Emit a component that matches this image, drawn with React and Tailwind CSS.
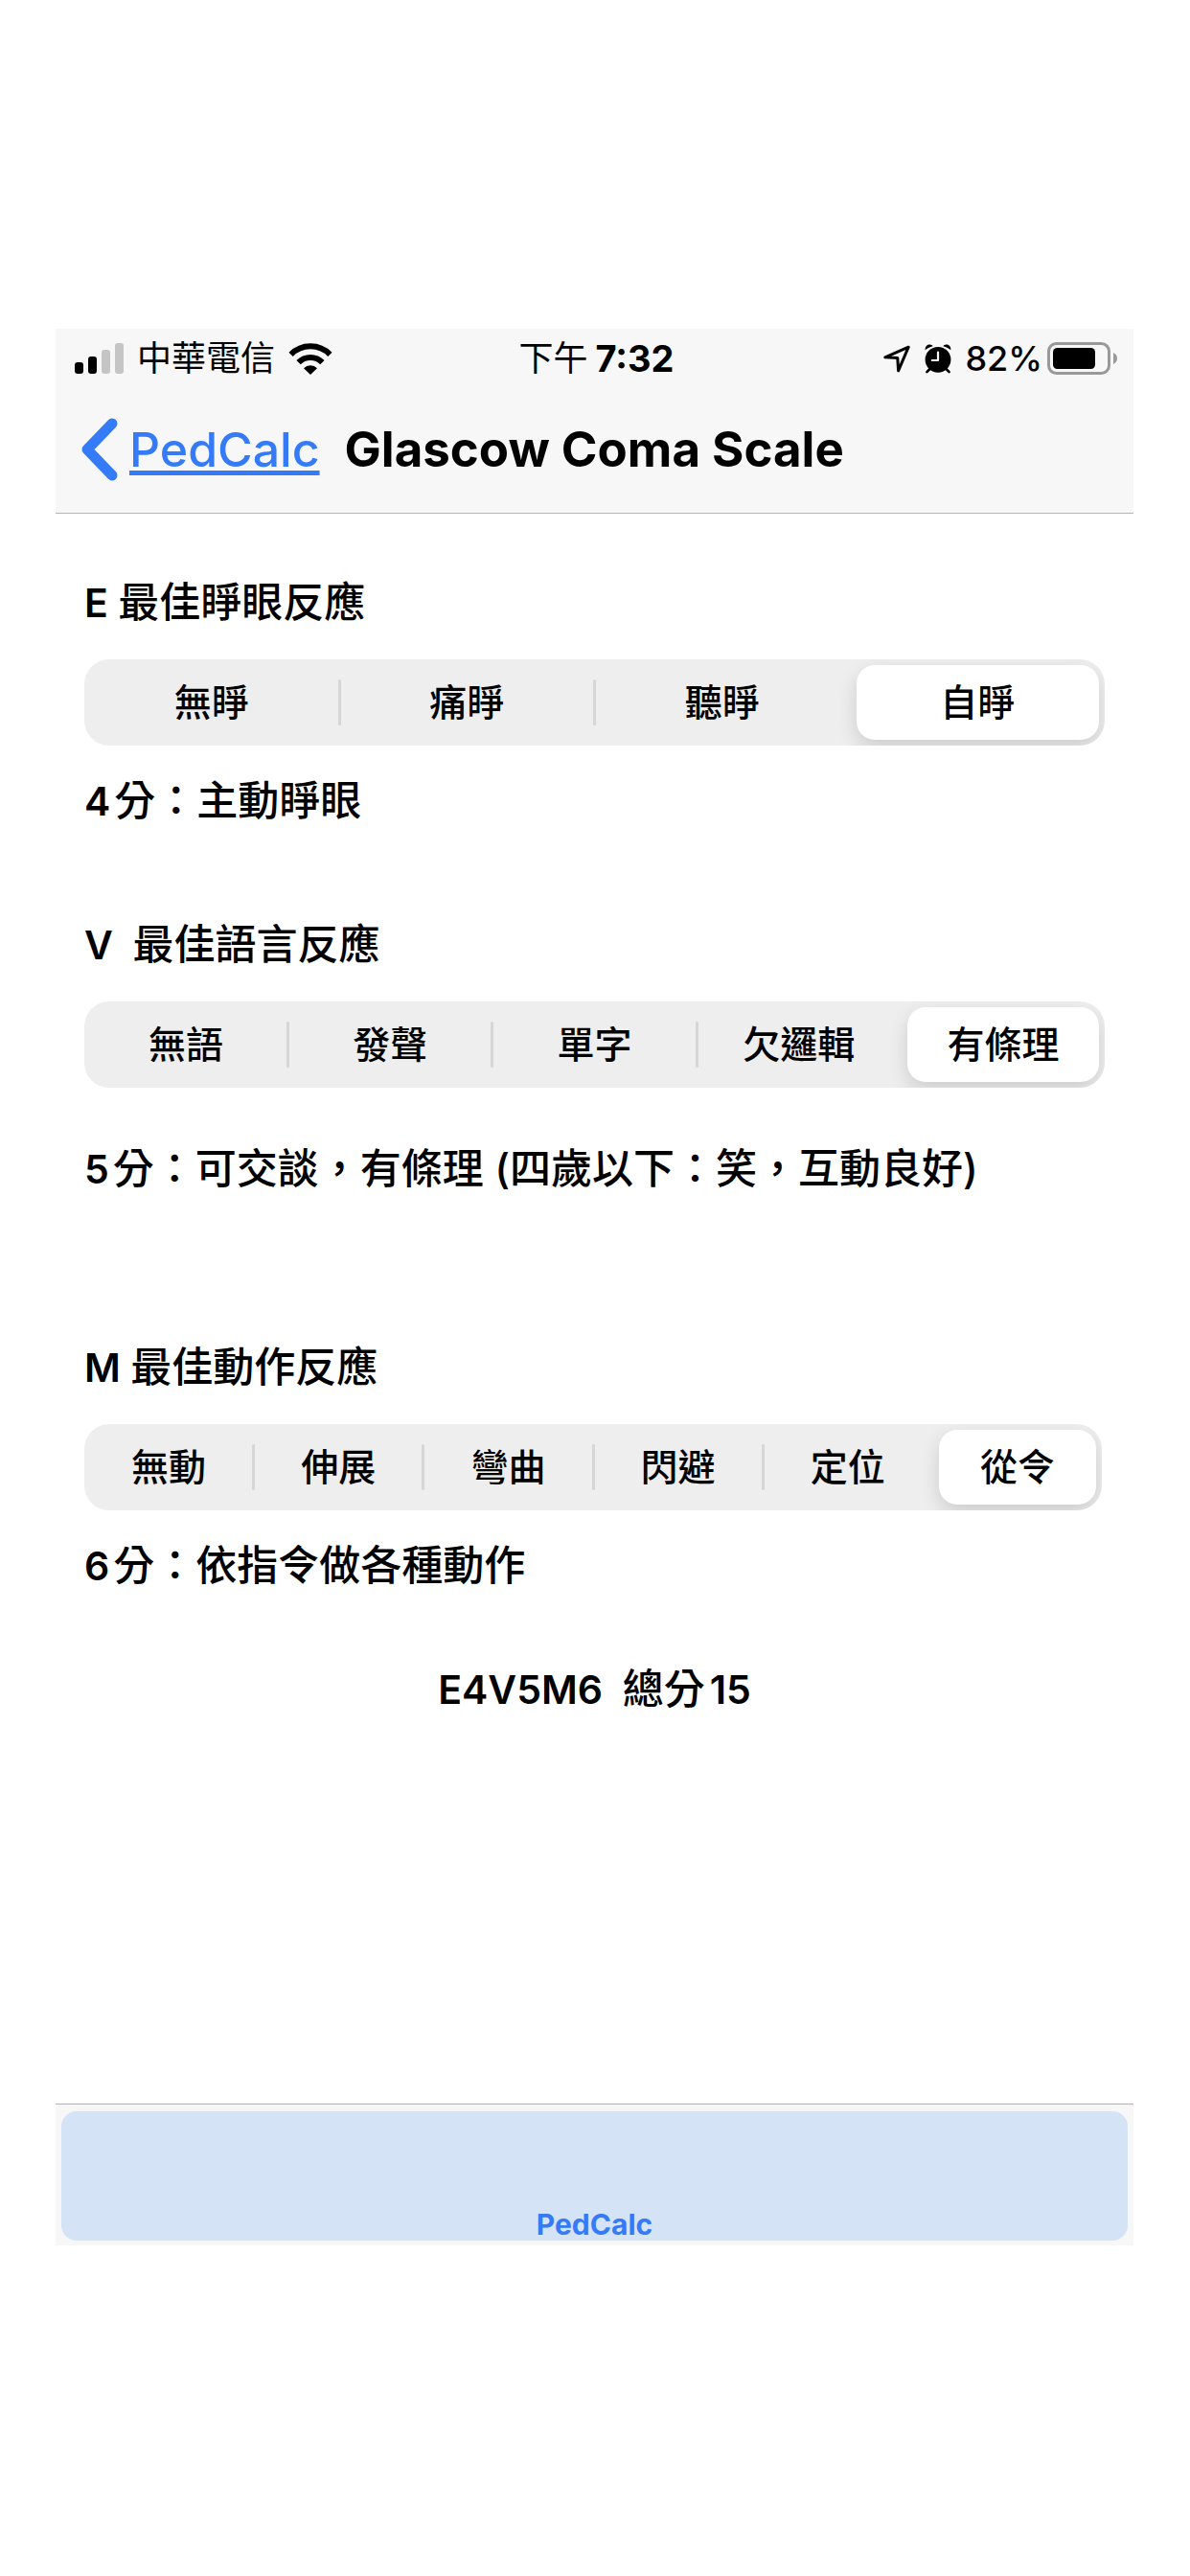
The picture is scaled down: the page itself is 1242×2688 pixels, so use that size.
import { useState } from "react";

const scales = [
  {
    id: "eye",
    code: "E ",
    title: "最佳睜眼反應",
    options: ["無睜", "痛睜", "聽睜", "自睜"],
    points: 4,
    result: "分：主動睜眼",
    resultClass: "mt-[25px]",
    sectionClass: "mt-[60px]",
    controlClass: "mr-[30px]",
  },
  {
    id: "verbal",
    code: "V  ",
    title: "最佳語言反應",
    options: ["無語", "發聲", "單字", "欠邏輯", "有條理"],
    points: 5,
    result: "分：可交談，有條理 (四歲以下：笑，互動良好)",
    resultClass: "mt-[52px]",
    sectionClass: "mt-[86px]",
    controlClass: "mr-[30px]",
  },
  {
    id: "motor",
    code: "M ",
    title: "最佳動作反應",
    options: ["無動", "伸展", "彎曲", "閃避", "定位", "從令"],
    points: 6,
    result: "分：依指令做各種動作",
    resultClass: "mt-[25px]",
    sectionClass: "mt-[143px]",
    controlClass: "mr-[33px]",
  },
];

function SignalIcon() {
  return (
    <svg width="51" height="33" viewBox="0 0 51 33" aria-hidden="true">
      <rect x="0" y="20" width="9" height="12" rx="3" />
      <rect x="14" y="14" width="9" height="18" rx="3" />
      <rect x="28" y="7" width="9" height="25" rx="3" fill="#c5c5c5" />
      <rect x="42" y="0" width="9" height="32" rx="3" fill="#c5c5c5" />
    </svg>
  );
}

function WifiIcon() {
  return (
    <svg width="46" height="33" viewBox="0 0 46 33" aria-hidden="true">
      <path d="M2.6 11.9A28.5 28.5 0 0 1 43.4 11.9" fill="none" stroke="#000" strokeWidth="6" />
      <path d="M10.6 20.2A17.2 17.2 0 0 1 35.4 20.2" fill="none" stroke="#000" strokeWidth="6" />
      <path d="M16 26.2A9.8 9.8 0 0 1 30 26.2L23 33Z" />
    </svg>
  );
}

function LocationIcon() {
  return (
    <svg width="28" height="29" viewBox="0 0 28 29" fill="none" stroke="#000" strokeWidth="3" strokeLinejoin="round" aria-hidden="true">
      <path d="M1.800 12.800L26.200 2.200L15.600 26.800L14.800 13.600Z" />
    </svg>
  );
}

function AlarmIcon() {
  return (
    <svg width="28" height="31" viewBox="0 0 28 31" aria-hidden="true">
      <circle cx="14" cy="16.3" r="13.4" />
      <path d="M.7 6.3C.2 3 2.6.4 5.4.6C6.8.7 8 1.2 8.6 2.2C5.3 3 2.7 4.6.7 6.3Z" />
      <path d="M27.3 6.3C27.8 3 25.4.4 22.6.6C21.2.7 20 1.2 19.4 2.2C22.7 3 25.3 4.6 27.3 6.3Z" />
      <path d="M5.5 26L2.4 29.1M22.5 26L25.6 29.1" stroke="#000" strokeWidth="2.6" strokeLinecap="round" />
      <path d="M14 8.6V17H7.8" fill="none" stroke="#f7f7f7" strokeWidth="2.2" strokeLinecap="round" strokeLinejoin="round" />
    </svg>
  );
}

function BatteryIcon() {
  return (
    <svg width="74" height="34" viewBox="0 0 74 34" aria-hidden="true">
      <rect x="1.5" y="1.5" width="63" height="31" rx="8" fill="none" stroke="#999" strokeWidth="3" />
      <rect x="6" y="6" width="44" height="22" rx="4.5" />
      <path d="M69 11C71.7 12.3 73 14.5 73 17C73 19.5 71.7 21.7 69 23Z" fill="#999" />
    </svg>
  );
}

function StatusBar() {
  return (
    <div className="grid h-[62px] grid-cols-[1fr_auto_1fr] items-center pr-[16px] pl-[20px] text-[36px] leading-[62px]">
      <div className="flex items-center gap-[14px]">
        <SignalIcon />
        <span>中華電信</span>
        <WifiIcon />
      </div>
      <div className="flex gap-[8px]">
        <span>下午</span>
        <span className="text-[38px] font-bold">7:32</span>
      </div>
      <div className="flex items-center justify-end">
        <LocationIcon />
        <span className="w-[15px]" />
        <AlarmIcon />
        <span className="mr-[5px] ml-[14px] text-[36px] font-medium">82%</span>
        <BatteryIcon />
      </div>
    </div>
  );
}

function NavBar() {
  return (
    <div className="flex h-[130px] items-center pb-[2px] pl-[26px] text-[50px] leading-[60px]">
      <a href="#pedcalc" className="flex items-center gap-[11px] text-[#357af6]">
        <svg width="40" height="66" viewBox="0 0 40 66" fill="none" stroke="currentColor" strokeWidth="11" strokeLinecap="round" strokeLinejoin="round" aria-hidden="true">
          <path d="M33 6L7 33L33 60" />
        </svg>
        <span className="font-medium underline decoration-[5px] underline-offset-[4px] [text-decoration-skip-ink:none]">PedCalc</span>
      </a>
      <h1 className="ml-[26px] text-[51px] font-bold">Glascow Coma Scale</h1>
    </div>
  );
}

function Latin({ children }) {
  return <span className="text-[41px] leading-none font-semibold">{children}</span>;
}

function SegmentedControl({ id, options, className }) {
  const [selected, setSelected] = useState(options.length - 1);
  return (
    <div
      role="radiogroup"
      aria-labelledby={`${id}-title`}
      className={`mt-[28px] ml-[30px] flex h-[90px] items-center overflow-hidden rounded-[26px] bg-[#eeeeee] px-[6px] ${className}`}
    >
      {options.map((option, i) => (
        <div key={option} className="contents">
          {i > 0 && (
            <span
              className={
                i === selected || i - 1 === selected
                  ? "mx-[5px] h-[48px] w-[3px]"
                  : "mx-[5px] h-[48px] w-[3px] rounded-full bg-[#d6d6d6]"
              }
            />
          )}
          <label className="relative flex h-[78px] min-w-0 flex-1 basis-0 cursor-pointer items-center justify-center rounded-[19px] text-[39px] leading-[48px] font-medium whitespace-nowrap has-checked:bg-white has-checked:shadow-[0_8px_20px_rgba(0,0,0,0.14)]">
            <input
              type="radio"
              name={id}
              className="absolute inset-0 cursor-pointer appearance-none"
              checked={i === selected}
              onChange={() => setSelected(i)}
            />
            {option}
          </label>
        </div>
      ))}
    </div>
  );
}

export default function App() {
  return (
    <div className="flex min-h-screen flex-col bg-white pt-[343px] pr-[59px] pb-[345px] pl-[58px] font-['Inter','Noto_Sans_CJK_TC',sans-serif] text-black">
      <header className="border-b border-[#b2b2b2] bg-[#f7f7f7]">
        <StatusBar />
        <NavBar />
      </header>

      <main className="flex-1 text-[43px] leading-[64px] font-medium">
        {scales.map((s) => (
          <section key={s.id} className={s.sectionClass}>
            <h2 id={`${s.id}-title`} className="ml-[30px] whitespace-pre">
              <Latin>{s.code}</Latin>
              {s.title}
            </h2>
            <SegmentedControl id={s.id} options={s.options} className={s.controlClass} />
            <p className={`ml-[30px] flex items-baseline gap-[4px] ${s.resultClass}`}>
              <Latin>{s.points}</Latin>
              <span>{s.result}</span>
            </p>
          </section>
        ))}
        <p className="mt-[65px] flex items-baseline justify-center gap-[5px] whitespace-pre">
          <span>
            <Latin>{"E4V5M6  "}</Latin>
            總分
          </span>
          <Latin>15</Latin>
        </p>
      </main>

      <footer className="border-t border-[#b2b2b2] bg-[#f7f7f7] px-[6px] pt-[7px] pb-[5px]">
        <button
          type="button"
          className="flex h-[135px] w-full items-end justify-center rounded-[16px] bg-[#d5e3f6] text-[30px] leading-[34px] font-bold text-[#357af6]"
        >
          PedCalc
        </button>
      </footer>
    </div>
  );
}
